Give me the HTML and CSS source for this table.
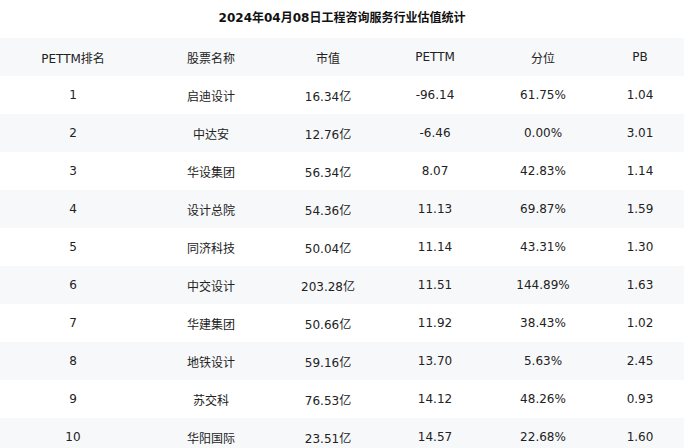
FILE: index.html
```html
<!DOCTYPE html>
<html lang="zh-CN">
<head>
<meta charset="utf-8">
<link rel="stylesheet" href="styles.css">
</head>
<body>
<div class="page">
  <h1 class="title">2024年04月08日工程咨询服务行业估值统计</h1>
  <table class="grid">
    <colgroup>
      <col class="c1"><col class="c2"><col class="c3"><col class="c4"><col class="c5"><col class="c6">
    </colgroup>
    <thead>
      <tr><th>PETTM排名</th><th>股票名称</th><th>市值</th><th>PETTM</th><th>分位</th><th>PB</th></tr>
    </thead>
    <tbody>
      <tr><td>1</td><td>启迪设计</td><td>16.34亿</td><td>-96.14</td><td>61.75%</td><td>1.04</td></tr>
      <tr><td>2</td><td>中达安</td><td>12.76亿</td><td>-6.46</td><td>0.00%</td><td>3.01</td></tr>
      <tr><td>3</td><td>华设集团</td><td>56.34亿</td><td>8.07</td><td>42.83%</td><td>1.14</td></tr>
      <tr><td>4</td><td>设计总院</td><td>54.36亿</td><td>11.13</td><td>69.87%</td><td>1.59</td></tr>
      <tr><td>5</td><td>同济科技</td><td>50.04亿</td><td>11.14</td><td>43.31%</td><td>1.30</td></tr>
      <tr><td>6</td><td>中交设计</td><td>203.28亿</td><td>11.51</td><td>144.89%</td><td>1.63</td></tr>
      <tr><td>7</td><td>华建集团</td><td>50.66亿</td><td>11.92</td><td>38.43%</td><td>1.02</td></tr>
      <tr><td>8</td><td>地铁设计</td><td>59.16亿</td><td>13.70</td><td>5.63%</td><td>2.45</td></tr>
      <tr><td>9</td><td>苏交科</td><td>76.53亿</td><td>14.12</td><td>48.26%</td><td>0.93</td></tr>
      <tr><td>10</td><td>华阳国际</td><td>23.51亿</td><td>14.57</td><td>22.68%</td><td>1.60</td></tr>
    </tbody>
  </table>
</div>
</body>
</html>
```
FILE: styles.css
```css
html, body {
  margin: 0;
  padding: 0;
  background: #ffffff;
}
body {
  font-family: "DejaVu Sans", "Noto Sans CJK SC", sans-serif;
  color: #222222;
  font-size: 12px;
}
.page {
  width: 684px;
}
.title {
  margin: 0;
  height: 38px;
  line-height: 36px;
  font-size: 12px;
  font-weight: bold;
  text-align: center;
  color: #111111;
}
.grid {
  width: 684px;
  border-collapse: collapse;
  table-layout: fixed;
}
.c1 { width: 146px; }
.c2 { width: 130px; }
.c3 { width: 104px; }
.c4 { width: 110px; }
.c5 { width: 106px; }
.c6 { width: 88px; }
.grid th, .grid td {
  height: 38px;
  padding: 0;
  text-align: center;
  vertical-align: middle;
  font-weight: normal;
  white-space: nowrap;
}
.grid thead tr {
  background: #f7f8fa;
}
.grid tbody tr:nth-child(even) {
  background: #f7f8fa;
}
```
